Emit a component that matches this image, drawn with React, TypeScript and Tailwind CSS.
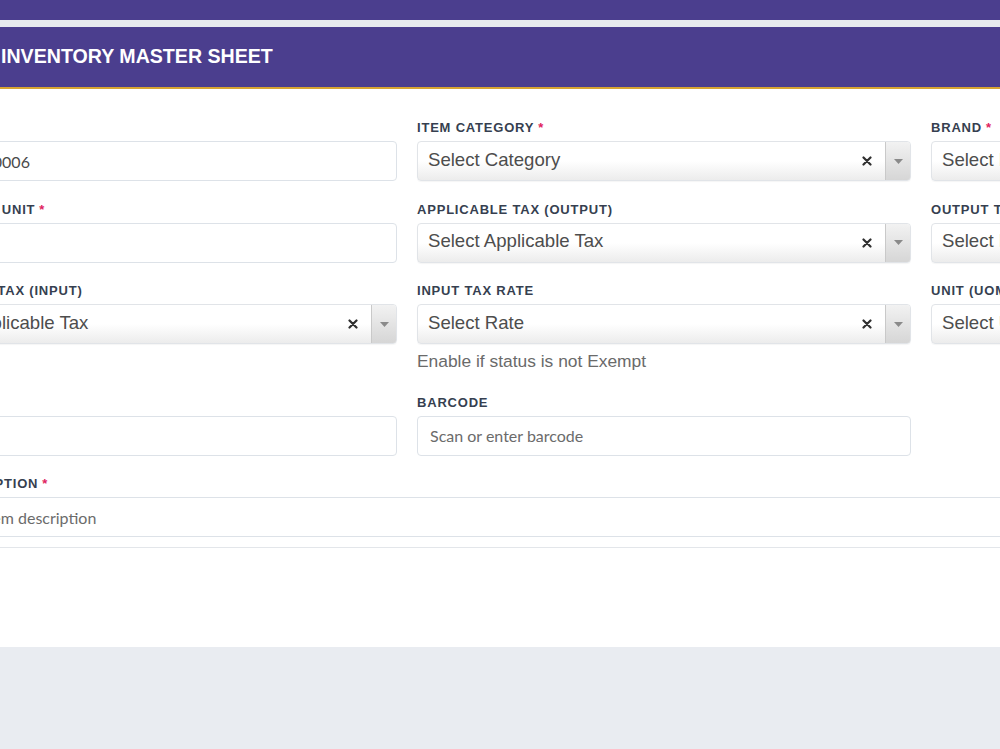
import React from 'react';

const label = 'block h-[19px] mb-[4px] font-["Liberation_Sans",Arial,sans-serif] text-[13px] leading-[19px] font-bold uppercase tracking-[0.8px] text-[#363f50] whitespace-nowrap';
const textInput = 'h-[40px] w-full rounded-[4px] border border-[#dde2e8] bg-white px-[12px] font-["Lato",sans-serif] text-[16px] text-[#4a4a4a] placeholder:text-[#6b6b6b] outline-none';

function Label({ text, required }: { text: string; required?: boolean }) {
  return (
    <span className={label}>
      {text}
      {required && <span className="ml-[4px] text-[#e0245e]">*</span>}
    </span>
  );
}

function SelectBox({ placeholder }: { placeholder: string }) {
  return (
    <div className="flex h-[40px] w-full items-stretch overflow-hidden rounded-[4px] border border-[#e1e4e8] bg-gradient-to-b from-white from-50% to-[#ececec] shadow-[0_1px_1px_rgba(0,0,0,0.04)]">
      <span className="flex flex-1 items-center pb-[3px] pl-[10px] font-['Liberation_Sans',Arial,sans-serif] text-[18.6px] text-[#4d4d4d] whitespace-nowrap">
        {placeholder}
      </span>
      <span className="flex w-[36px] items-center justify-center">
        <svg width="10" height="10" viewBox="0 0 10 10">
          <path d="M1.5 1.5 L8.5 8.5 M8.5 1.5 L1.5 8.5" stroke="#2f2f2f" strokeWidth="2.2" strokeLinecap="round" />
        </svg>
      </span>
      <span className="flex w-[25px] items-center justify-center border-l border-[#c9c9c9] bg-gradient-to-b from-[#f2f2f2] to-[#d6d6d6]">
        <svg width="9" height="5" viewBox="0 0 9 5">
          <path d="M0 0 H9 L4.5 5 Z" fill="#8a8a8a" />
        </svg>
      </span>
    </div>
  );
}

function Field({ children }: { children: React.ReactNode }) {
  return <div className="mb-[18.5px] flex flex-col">{children}</div>;
}

export default function App() {
  return (
    <div className="min-h-[749px] w-full overflow-hidden bg-[#e9ecf1]">
      <div className="h-[20px] bg-[#4b3e8e]" />
      <div className="h-[7px] bg-[#e7e9ee]" />
      <header className="flex h-[62px] items-center border-b-2 border-[#d8a532] bg-[#4b3e8e] pl-[1px]">
        <h1 className="font-['Liberation_Sans',Arial,sans-serif] text-[19.6px] font-bold text-white whitespace-nowrap">
          INVENTORY MASTER SHEET
        </h1>
      </header>

      <main className="h-[558px] bg-white pt-[29px]">
        <div className="-ml-[98px] grid w-[1523px] grid-cols-[495px_494px_494px] gap-x-[20px]">
          <Field>
            <Label text="ITEM CODE" required />
            <input className={textInput} defaultValue="ITM-2024-0006" />
          </Field>
          <Field>
            <Label text="ITEM CATEGORY" required />
            <SelectBox placeholder="Select Category" />
          </Field>
          <Field>
            <Label text="BRAND" required />
            <SelectBox placeholder="Select Brand" />
          </Field>

          <Field>
            <Label text="CONVERSION UNIT" required />
            <input className={textInput} />
          </Field>
          <Field>
            <Label text="APPLICABLE TAX (OUTPUT)" />
            <SelectBox placeholder="Select Applicable Tax" />
          </Field>
          <Field>
            <Label text="OUTPUT TAX RATE" />
            <SelectBox placeholder="Select Rate" />
          </Field>

          <Field>
            <Label text="APPLICABLE TAX (INPUT)" />
            <SelectBox placeholder="Select Applicable Tax" />
          </Field>
          <Field>
            <Label text="INPUT TAX RATE" />
            <SelectBox placeholder="Select Rate" />
            <p className="mt-[5px] h-[25px] font-['Liberation_Sans',Arial,sans-serif] text-[17.4px] leading-[24px] text-[#6a6a6a] whitespace-nowrap">
              Enable if status is not Exempt
            </p>
          </Field>
          <Field>
            <Label text="UNIT (UOM)" required />
            <SelectBox placeholder="Select Unit" />
          </Field>

          <Field>
            <Label text="HSN CODE" />
            <input className={textInput} />
          </Field>
          <Field>
            <Label text="BARCODE" />
            <input className={textInput} placeholder="Scan or enter barcode" />
          </Field>
          <div />

          <div className="col-span-3 flex flex-col">
            <Label text="ITEM DESCRIPTION" required />
            <input className={textInput} placeholder="Enter full item description" />
          </div>
        </div>
        <div className="mt-[10px] border-t border-[#e3e6ea]" />
      </main>
    </div>
  );
}
